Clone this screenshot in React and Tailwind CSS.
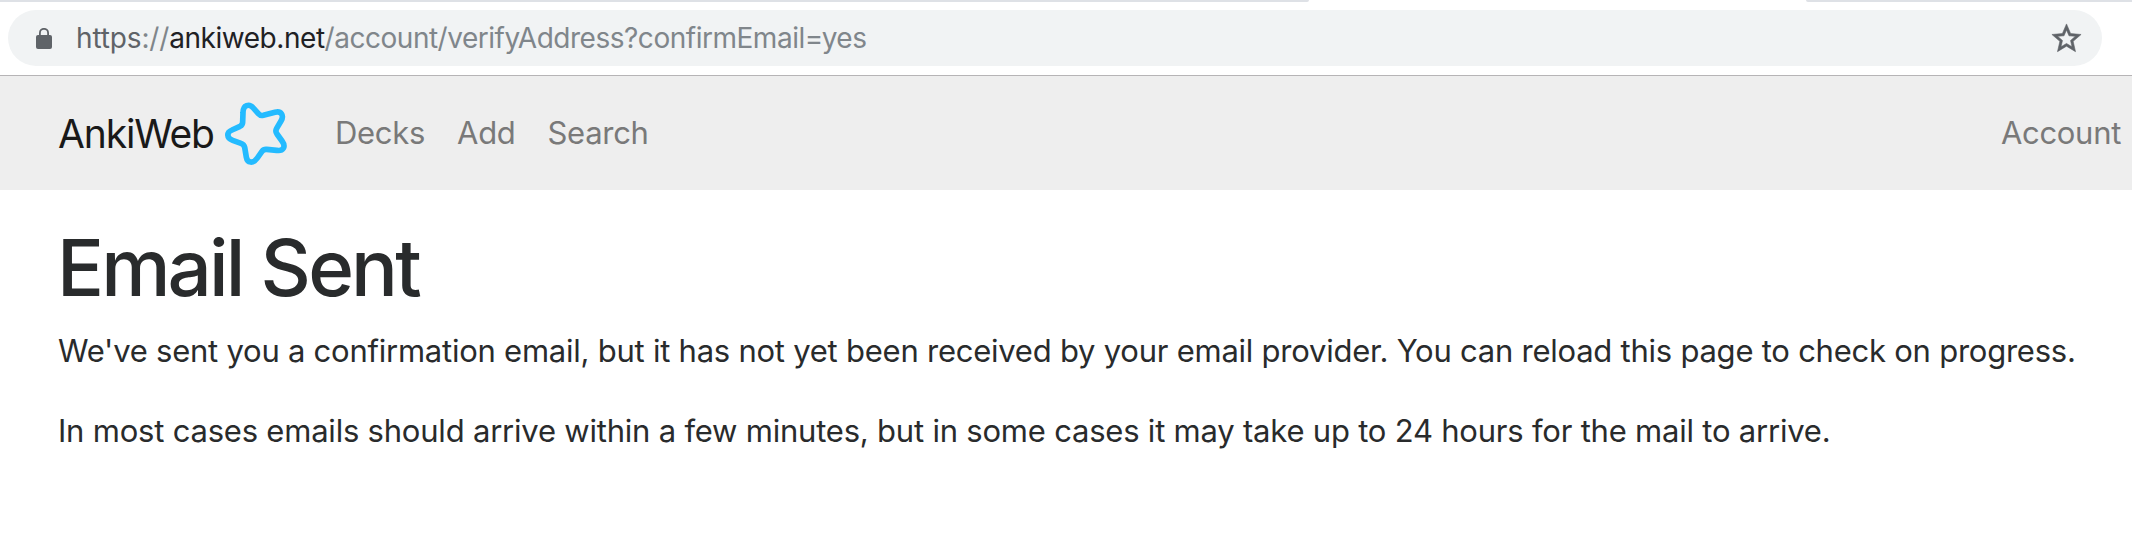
function LockIcon() {
  return (
    <svg className="mt-px h-[21px] w-4 shrink-0" viewBox="0 0 16 21" fill="none">
      <rect y="7" width="16" height="14" rx="2" fill="#5f6368" />
      <path d="M3.9 8V4.9a4.1 4.1 0 0 1 8.2 0V8" stroke="#5f6368" strokeWidth="1.8" />
    </svg>
  );
}

function BookmarkIcon() {
  return (
    <svg className="size-[35px] shrink-0" viewBox="0 0 24 24" fill="#5f6368" stroke="#5f6368" strokeWidth="0.4">
      <path d="M22 9.24l-7.19-.62L12 2 9.19 8.63 2 9.24l5.46 4.73L5.82 21 12 17.27 18.18 21l-1.63-7.03L22 9.24zM12 15.4l-3.76 2.27 1-4.28-3.32-2.88 4.38-.38L12 6.1l1.71 4.04 4.38.38-3.32 2.88 1 4.28L12 15.4z" />
    </svg>
  );
}

function Logo() {
  return (
    <svg className="mt-1 size-[90px] shrink-0" viewBox="0 0 270 270" fill="none">
      <path
        d="M98 96L99 68C99 44 118 40 130 54L145 71Q151 78 160 76L195 67C213 62 223 76 213 93L200 115Q195 124 201 132L216 153C229 171 219 184 200 181L170 178Q161 177 156 184L142 204C129 222 112 219 109 202L104 172Q102 163 93 160L68 151C49 144 49 127 66 120L90 109Q98 105 98 96Z"
        stroke="#24bbff"
        strokeWidth="17"
        strokeLinejoin="round"
      />
    </svg>
  );
}

export default function App() {
  return (
    <div className="flex h-[542px] w-full flex-col overflow-hidden bg-white font-['Inter',sans-serif]">
      <div className="flex h-[2px] shrink-0 justify-between">
        <div className="w-[1309px] rounded-br-[3px] bg-[#dee1e6]" />
        <div className="w-[326px] rounded-bl-[3px] bg-[#dee1e6]" />
      </div>
      <div className="flex h-[74px] shrink-0 items-start border-b border-[#b6b4b6] pt-2 pr-[30px] pl-2">
        <div className="flex h-14 flex-1 items-center rounded-full bg-[#f1f3f4] pr-[18.5px] pl-7">
          <LockIcon />
          <div className="ml-6 flex-1 text-[28px] text-[#80868b]">
            <span className="tracking-[-0.15px] text-[#5f6368]">https</span>
            <span className="tracking-[-0.15px]">://</span>
            <span className="tracking-[-0.45px] text-[#202124]">ankiweb.net</span>
            <span className="tracking-[-0.48px]">/account/verifyAddress?confirmEmail=yes</span>
          </div>
          <BookmarkIcon />
        </div>
      </div>
      <nav className="flex h-[114px] shrink-0 items-center bg-[#eeeeee] text-[31px] tracking-[-0.3px] text-[#797979]">
        <div className="flex w-[277px] items-center pl-[58px]">
          <span className="mt-[2px] w-[152px] text-[39px] tracking-[-1.15px] whitespace-nowrap text-[#191919]">AnkiWeb</span>
          <Logo />
        </div>
        <div className="ml-[58px] flex gap-8">
          <span>Decks</span>
          <span>Add</span>
          <span>Search</span>
        </div>
        <span className="mr-[11px] ml-auto">Account</span>
      </nav>
      <main className="pt-[34px] pl-[58px] text-[31px] leading-[48px] whitespace-nowrap text-[#292b2c]">
        <h1 className="-ml-px text-[78px] leading-[88px] font-medium tracking-[-2.85px]">Email Sent</h1>
        <p className="mt-[15px] tracking-[-0.24px]">
          We've sent you a confirmation email, but it has not yet been received by your email provider. You can reload this page to check on progress.
        </p>
        <p className="mt-8 tracking-[-0.21px]">
          In most cases emails should arrive within a few minutes, but in some cases it may take up to 24 hours for the mail to arrive.
        </p>
      </main>
    </div>
  );
}
